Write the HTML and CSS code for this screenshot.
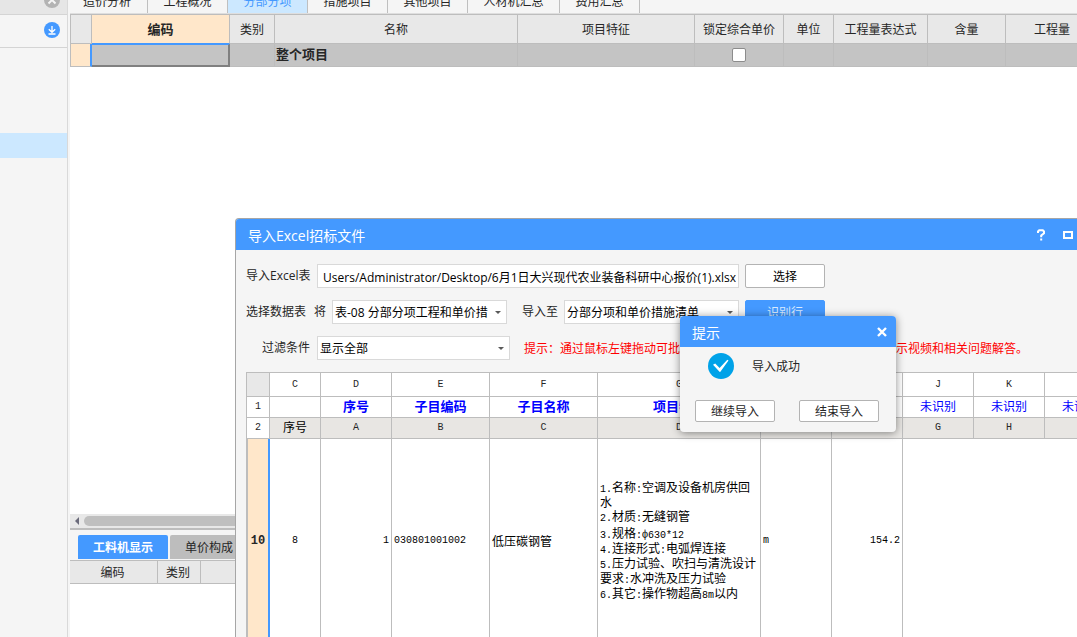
FILE: index.html
```
<!DOCTYPE html>
<html lang="zh-CN">
<head>
<meta charset="utf-8">
<title>导入Excel招标文件</title>
<link rel="stylesheet" href="styles.css">
</head>
<body>
<div class="app">
  <aside class="sidebar">
    <div class="side-top">
      <button class="round-btn" aria-label="关闭">
        <svg width="16" height="16" viewBox="0 0 16 16"><circle cx="8" cy="8" r="8" fill="#b3b3b3"/><path d="M4.5 4.5l7 7M11.5 4.5l-7 7" stroke="#f5f5f5" stroke-width="2"/></svg>
      </button>
    </div>
    <div class="side-tools">
      <button class="round-btn" aria-label="下载">
        <svg width="16" height="16" viewBox="0 0 16 16"><circle cx="8" cy="8" r="8" fill="#4499ff"/><path d="M8 4v6M4.8 7.2L8 10.3l3.2-3.1M4.5 12h7" fill="none" stroke="#fff" stroke-width="1.3"/></svg>
      </button>
    </div>
    <div class="side-selected"></div>
  </aside>

  <main class="main">
    <nav class="tabs">
      <button class="tab">造价分析</button>
      <button class="tab">工程概况</button>
      <button class="tab active">分部分项</button>
      <button class="tab">措施项目</button>
      <button class="tab">其他项目</button>
      <button class="tab wide">人材机汇总</button>
      <button class="tab">费用汇总</button>
    </nav>

    <div class="grid-area">
      <table class="grid">
        <colgroup><col class="w21"><col class="w138"><col class="w45"><col class="w243"><col class="w177"><col class="w89"><col class="w50"><col class="w94"><col class="w78"><col class="w93"></colgroup>
        <thead>
          <tr><th></th><th class="current">编码</th><th>类别</th><th>名称</th><th>项目特征</th><th>锁定综合单价</th><th>单位</th><th>工程量表达式</th><th>含量</th><th>工程量</th></tr>
        </thead>
        <tbody>
          <tr><td class="row-head"></td><td class="cell-current"></td><td></td><td class="root">整个项目</td><td></td><td class="check"><input type="checkbox" aria-label="锁定综合单价"></td><td></td><td></td><td></td><td></td></tr>
        </tbody>
      </table>
    </div>

    <div class="scrollbar"><span class="scroll-left"></span><span class="scroll-thumb"></span></div>

    <section class="detail">
      <nav class="detail-tabs">
        <button class="dtab active">工料机显示</button>
        <button class="dtab">单价构成</button>
      </nav>
      <table class="detail-grid">
        <colgroup><col class="w88"><col class="w43"><col></colgroup>
        <thead><tr><th>编码</th><th>类别</th><th></th></tr></thead>
      </table>
    </section>
  </main>
</div>

<section class="dialog" role="dialog" aria-label="导入Excel招标文件">
  <header class="dialog-title">
    <h1>导入Excel招标文件</h1>
    <button class="win-btn" aria-label="帮助"><svg width="10" height="12" viewBox="0 0 10 12"><path d="M2 4V2.5L3.2 1.2h3.6L8 2.5v1.7L5.2 6.5V8.2M5.2 9.5v2" fill="none" stroke="#fff" stroke-width="2"/></svg></button>
    <button class="win-btn" aria-label="最大化"><svg width="10" height="8" viewBox="0 0 10 8"><rect x="1" y="1" width="8" height="6" fill="none" stroke="#fff" stroke-width="2"/></svg></button>
    <button class="win-btn" aria-label="关闭"><svg width="10" height="10" viewBox="0 0 10 10"><path d="M1 1l8 8M9 1L1 9" stroke="#fff" stroke-width="2"/></svg></button>
  </header>

  <div class="form">
    <div class="form-row">
      <label class="lead" for="path">导入Excel表</label>
      <input class="path" id="path" type="text" value="Users/Administrator/Desktop/6月1日大兴现代农业装备科研中心报价(1).xlsx">
      <button class="btn">选择</button>
    </div>
    <div class="form-row">
      <label class="lead-wide" for="sheet-select"><span>选择数据表</span><span>将</span></label>
      <span class="combo"><select id="sheet-select"><option>表-08 分部分项工程和单价措施项目清单与计价表</option></select></span>
      <label class="to" for="target">导入至</label>
      <span class="combo"><select id="target"><option>分部分项和单价措施清单</option></select></span>
      <button class="btn primary">识别行</button>
    </div>
    <div class="form-row">
      <label class="lead right" for="filter">过滤条件</label>
      <span class="combo combo-wide"><select id="filter"><option>显示全部</option></select></span>
      <p class="tip">提示：通过鼠标左键拖动可批量识别行，点击右上角帮助可查看操作演示视频和相关问题解答。</p>
    </div>
  </div>

  <div class="sheet-wrap">
    <table class="sheet">
      <colgroup><col class="w23"><col class="w51"><col class="w71"><col class="w98"><col class="w108"><col class="w163"><col class="w71"><col class="w71"><col class="w71"><col class="w71"><col class="w71"></colgroup>
      <thead>
        <tr class="letters"><th class="corner"></th><th>C</th><th>D</th><th>E</th><th>F</th><th>G</th><th>H</th><th>I</th><th>J</th><th>K</th><th>L</th></tr>
      </thead>
      <tbody>
        <tr class="fields"><th>1</th><td></td><td class="known">序号</td><td class="known">子目编码</td><td class="known">子目名称</td><td class="known">项目特征</td><td class="known">计量单位</td><td class="known">工程量</td><td class="unknown">未识别</td><td class="unknown">未识别</td><td class="unknown">未识别</td></tr>
        <tr class="letters shaded"><th>2</th><td class="cjk">序号</td><td>A</td><td>B</td><td>C</td><td>D</td><td>E</td><td>F</td><td>G</td><td>H</td><td>I</td></tr>
        <tr class="data">
          <th>10</th><td class="center">8</td><td class="num">1</td><td>030801001002</td><td class="cjk">低压碳钢管</td>
          <td class="cjk feature">
            <div><span class="mono">1.</span>名称<span class="mono">:</span>空调及设备机房供回水</div>
            <div><span class="mono">2.</span>材质<span class="mono">:</span>无缝钢管</div>
            <div class="tall"><span class="mono">3.</span>规格<span class="mono">:ф630*12</span></div>
            <div><span class="mono">4.</span>连接形式<span class="mono">:</span>电弧焊连接</div>
            <div><span class="mono">5.</span>压力试验、吹扫与清洗设计要求<span class="mono">:</span>水冲洗及压力试验</div>
            <div><span class="mono">6.</span>其它<span class="mono">:</span>操作物超高<span class="mono">8m</span>以内</div>
          </td>
          <td>m</td><td class="num">154.2</td><td class="open"></td><td class="open"></td><td class="open"></td>
        </tr>
      </tbody>
    </table>
  </div>
</section>

<section class="message" role="alertdialog" aria-label="提示">
  <header class="message-title">
    <h2>提示</h2>
    <button class="win-btn" aria-label="关闭"><svg width="10" height="10" viewBox="0 0 10 10"><path d="M1 1l8 8M9 1L1 9" stroke="#fff" stroke-width="2.4"/></svg></button>
  </header>
  <div class="message-body">
    <svg width="26" height="26" viewBox="0 0 26 26"><circle cx="13" cy="13" r="13" fill="#00a2e8"/><path d="M5 11.8l2.2-1.2 4.4 4.4L19.3 6.8l1.2.8L12 19.3z" fill="#fff"/></svg>
    <p>导入成功</p>
  </div>
  <div class="message-actions">
    <button class="btn small">继续导入</button>
    <button class="btn small">结束导入</button>
  </div>
</section>
</body>
</html>
```
FILE: styles.css
```
* { box-sizing: border-box; }
html, body { height: 100%; }
body {
  margin: 0;
  overflow: hidden;
  position: relative;
  background: #f5f5f5;
  color: #262626;
  font: 12px/16px "Open Sans", "Noto Sans CJK SC", sans-serif;
}
button, input, select { font: inherit; color: inherit; margin: 0; }
button { border: 0; padding: 0; background: none; white-space: nowrap; }
h1, h2, p { margin: 0; font-weight: 400; }
svg { display: block; }
table { border-collapse: separate; border-spacing: 0; table-layout: fixed; }
th, td { padding: 0; font-weight: 400; }

.app { display: flex; height: 100%; }

/* sidebar */
.sidebar { flex: none; width: 68px; border-right: 1px solid #d9d9d9; }
.side-top, .side-tools { display: flex; justify-content: flex-end; padding-right: 7px; border-bottom: 1px solid #d4d4d4; }
.side-top { height: 15px; align-items: flex-end; padding-bottom: 6px; background: #e6e6e6; overflow: hidden; }
.side-tools { height: 33px; align-items: center; padding-bottom: 2px; }
.side-selected { height: 25px; margin-top: 85px; background: #cce8ff; }

/* upper tabs */
.main { flex: 1; min-width: 0; display: flex; flex-direction: column; margin-left: 2px; background: #fff; }
.tabs { display: flex; align-items: flex-end; height: 14px; overflow: hidden; background: #f5f5f5; border-bottom: 1px solid #dedede; }
.tab { flex: none; width: 80px; height: 22px; border-right: 1px solid #bfbfbf; }
.tab:first-child { width: 78px; padding-right: 3px; }
.tab.wide { width: 92px; }
.tab.active { background: #cce8ff; color: #4499ff; }

/* main grid */
.grid-area { flex: 1; min-height: 0; overflow: hidden; }
.grid { width: 1029px; border-top: 1px solid #bdbdbd; border-left: 1px solid #bdbdbd; }
.grid th { height: 29px; padding-top: 2px; background: #e8e8e8; border-right: 1px solid #bdbdbd; border-bottom: 1px solid #bdbdbd; }
.grid .current { padding-top: 0; background: #ffe7ca; font-size: 13px; font-weight: 700; border-bottom: 1px solid #4499ff; }
.grid td { height: 23px; background: #c4c4c4; border-right: 1px solid #bdbdbd; border-bottom: 1px solid #bdbdbd; }
.grid .row-head { background: #ffe7ca; border-right: 2px solid #4499ff; }
.grid .cell-current { border-top: 1px solid #4499ff; border-right: 2px solid #808080; border-bottom: 2px solid #808080; }
.grid .root { padding: 0 0 2px 1px; font-size: 13px; font-weight: 700; }
.check { text-align: center; }
.check input { appearance: none; display: block; width: 14px; height: 14px; margin: 0 auto; background: #fff; border: 1px solid #8c8c8c; border-radius: 2px; }

.w21 { width: 21px; } .w138 { width: 138px; } .w45 { width: 45px; } .w243 { width: 243px; }
.w177 { width: 177px; } .w89 { width: 89px; } .w50 { width: 50px; } .w94 { width: 94px; }
.w78 { width: 78px; } .w93 { width: 93px; } .w88 { width: 88px; } .w43 { width: 43px; }
.w23 { width: 23px; } .w51 { width: 51px; } .w71 { width: 71px; } .w98 { width: 98px; }
.w108 { width: 108px; } .w163 { width: 163px; }

/* lower panel */
.scrollbar { display: flex; align-items: center; gap: 5px; height: 14px; padding-left: 5px; background: #e8e8e8; }
.scroll-left { border: 4px solid transparent; border-right-color: #6b6b7b; border-left: 0; }
.scroll-thumb { flex: 1; height: 10px; border-radius: 5px; background: #bfbfbf; }
.detail { height: 109px; border-top: 2px solid #bdbdbd; }
.detail-tabs { display: flex; gap: 2px; height: 31px; padding: 5px 0 0 8px; background: #f5f5f5; border-bottom: 1px solid #bdbdbd; }
.dtab { height: 24px; width: 78px; padding-top: 1px; border-radius: 2px 2px 0 0; background: #bdbdbd; }
.dtab.active { width: 90px; background: #4499ff; color: #fff; font-weight: 700; }
.detail-grid { width: 100%; }
.detail-grid th { height: 23px; padding: 2px 2px 0 0; background: #e8e8e8; border-right: 1px solid #bdbdbd; border-bottom: 1px solid #bdbdbd; }

/* import window */
.dialog {
  position: absolute; left: 235px; top: 218px; bottom: 0; width: 878px;
  display: flex; flex-direction: column; overflow: hidden;
  background: #f5f5f5; border: 1px solid #a6a6a6; border-bottom: 0; border-radius: 4px 4px 0 0;
}
.dialog-title { display: flex; align-items: center; gap: 7px; height: 31px; padding: 0 7px 0 12px; background: #4499ff; color: #fff; }
.dialog-title h1 { flex: 1; padding-top: 2px; font-size: 14px; line-height: 20px; }
.win-btn { display: flex; align-items: center; justify-content: center; width: 20px; height: 20px; }
.form { display: flex; flex-direction: column; gap: 12px; padding: 14px 10px 12px; }
.form-row { display: flex; align-items: center; height: 24px; white-space: nowrap; }
.lead { width: 71px; }
.lead.right { padding-right: 7px; text-align: right; }
.lead-wide { display: flex; gap: 8px; width: 86px; }
.to { width: 57px; padding-left: 15px; }
.path { width: 422px; height: 24px; margin-right: 6px; padding: 2px 2px 0 0; text-align: right; color: #000; background: #fff; border: 1px solid #d9d9d9; outline: 0; }
.combo { position: relative; width: 175px; height: 24px; }
.combo-wide { width: 193px; }
.combo select { appearance: none; display: block; width: 100%; height: 24px; padding: 2px 18px 0 2px; color: #000; background: #fff; border: 1px solid #d9d9d9; border-radius: 0; }
.combo::after { content: ""; position: absolute; right: 6px; top: 11px; border: 3px solid transparent; border-top-color: #595959; border-bottom: 0; }
.btn { width: 80px; height: 24px; padding-top: 2px; background: #fff; color: #000; border: 1px solid #b3b3b3; border-radius: 2px; }
.btn.primary { margin-left: 6px; background: #4499ff; border-color: #4499ff; color: #d9ebff; }
.btn.small { height: 22px; color: #262626; }
.tip { padding: 2px 0 0 14px; color: #f00; }

/* spreadsheet */
.sheet-wrap { flex: 1; min-height: 0; margin-left: 10px; overflow: hidden; }
.sheet { width: 870px; border-top: 1px solid #bdbdbd; border-left: 1px solid #bdbdbd; background: #fff; font: 10px/14px "Liberation Mono", "Noto Sans CJK SC", monospace; }
.sheet th, .sheet td { border-right: 1px solid #bdbdbd; border-bottom: 1px solid #bdbdbd; }
.sheet .letters th, .sheet .letters td, .sheet .fields th, .sheet .fields td { height: 21px; text-align: center; }
.sheet thead .letters th { height: 24px; }
.sheet .corner { background: #e8e8e8; }
.sheet .shaded td { background: #e8e6e3; }
.sheet .cjk { font: 12px/14px "Noto Sans CJK SC", sans-serif; color: #000; }
.sheet .shaded .cjk { padding-bottom: 2px; }
.sheet .known, .sheet .unknown { padding-bottom: 2px; font: 12px/16px "Noto Sans CJK SC", sans-serif; color: #00f; }
.sheet .known { font-size: 13px; font-weight: 700; white-space: nowrap; overflow: hidden; }
.sheet .data td { height: 204px; padding: 0 2px; color: #000; }
.sheet .data th { font-size: 12px; font-weight: 700; background: #ffe7ca; border-right: 2px solid #4499ff; border-left: 1px solid #bdbdbd; }
.sheet .data .center { text-align: center; }
.sheet .data .num { text-align: right; }
.sheet .data .feature { padding: 0 1px 0 2px; }
.sheet .data .open { border-right-color: transparent; }
.mono { font: 10px/10px "Liberation Mono", monospace; }
.sheet .tall { line-height: 17px; }

/* message box */
.message {
  position: absolute; left: 680px; top: 316px; width: 216px;
  background: #f5f5f5; border-radius: 4px; box-shadow: 0 1px 8px rgba(0, 0, 0, 0.45); overflow: hidden;
}
.message-title { display: flex; align-items: center; justify-content: space-between; height: 31px; padding: 0 4px 0 12px; background: #4499ff; color: #fff; }
.message-title h2 { padding-top: 2px; font-size: 14px; line-height: 20px; }
.message-body { display: flex; align-items: center; gap: 18px; padding: 6px 28px 0; }
.message-body p { padding-top: 2px; }
.message-actions { display: flex; gap: 24px; padding: 21px 15px 10px; }
```
